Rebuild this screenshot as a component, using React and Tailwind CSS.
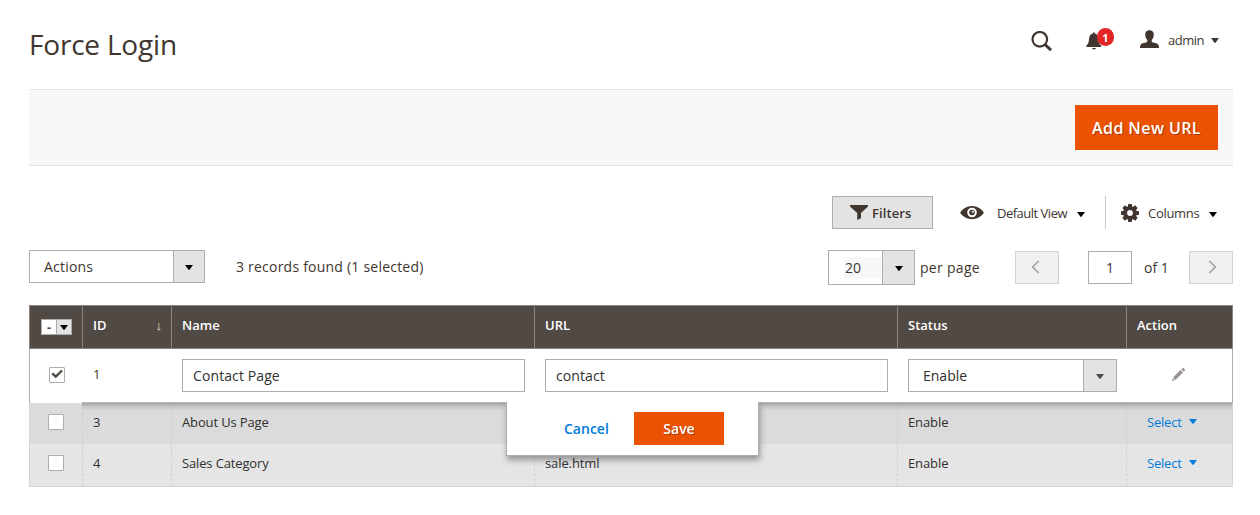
const cols = 'grid grid-cols-[53px_89px_363px_363px_229px_107px]';

function Caret({ className = 'text-black' }) {
  return (
    <svg width="8" height="5" viewBox="0 0 8 5" className={`block shrink-0 ${className}`}>
      <path d="M0 0h8L4.500 4.800h-1z" fill="currentColor" />
    </svg>
  );
}

function SearchIcon() {
  return (
    <svg width="22" height="22" viewBox="0 0 22 22" className="block" fill="none" stroke="#41362f">
      <circle cx="8.800" cy="8.300" r="7.300" strokeWidth="2.200" />
      <path d="M14 13.500l6 5.700" strokeWidth="3" />
    </svg>
  );
}

function BellIcon() {
  return (
    <svg width="16" height="18" viewBox="0 0 16 18" className="block" fill="#41362f">
      <path d="M7 0.4h1.800v1.200c2.200.5 3.400 2.200 3.400 4.800 0 3.600.800 5.600 3 7v1.600H0.400V13.400c2-1.400 2.400-3.400 2.700-7 .2-2.600 1.600-4.300 3.900-4.800z" />
      <path d="M6 16h4c-.2.900-.9 1.400-2 1.400s-1.800-.5-2-1.400z" />
    </svg>
  );
}

function UserIcon() {
  return (
    <svg width="19" height="18" viewBox="0 0 19 18" className="block" fill="#41362f">
      <path d="M9.500 0.300c2.900 0 4.300 1.600 4.300 4.200 0 2.500-.9 4.300-2.100 5.600v1.300c.4 1 1.600 1.200 3.500 1.700 2.400.6 3.700 1.300 3.800 4.900H0c.1-3.600 1.400-4.300 3.800-4.900 1.900-.5 3.100-.7 3.500-1.700v-1.300C6.100 8.800 5.200 7 5.200 4.500 5.200 1.900 6.600.3 9.500.3z" />
    </svg>
  );
}

function FunnelIcon() {
  return (
    <svg width="18" height="15" viewBox="0 0 18 15" className="block" fill="#41362f">
      <path d="M0 0h18v1.500L11 8v5.300L7.200 15V8L0 1.500z" />
    </svg>
  );
}

function EyeIcon() {
  return (
    <svg width="24" height="14" viewBox="0 0 24 14" className="block">
      <path d="M0 6.700C3 2.200 7 0 12 0S21 2.200 24 6.700c-3 4.300-7 6.500-12 6.500S3 11 0 6.700z" fill="#41362f" />
      <circle cx="12" cy="6.500" r="4.800" fill="#fff" />
      <circle cx="12" cy="6.500" r="2.800" fill="#41362f" />
      <circle cx="12.800" cy="5.800" r="1" fill="#fff" />
    </svg>
  );
}

function GearIcon() {
  return (
    <svg width="18" height="18" viewBox="0 0 18 18" className="block">
      <g fill="#41362f">
        <path d="M7.200 0h3.600l.6 4H6.600zM7.200 18h3.600l.6-4H6.600z" />
        <path d="M7.200 0h3.600l.6 4H6.600zM7.200 18h3.600l.6-4H6.600z" transform="rotate(45 9 9)" />
        <path d="M7.200 0h3.600l.6 4H6.600zM7.200 18h3.600l.6-4H6.600z" transform="rotate(90 9 9)" />
        <path d="M7.200 0h3.600l.6 4H6.600zM7.200 18h3.600l.6-4H6.600z" transform="rotate(135 9 9)" />
      </g>
      <circle cx="9" cy="9" r="4.800" fill="none" stroke="#41362f" strokeWidth="3.800" />
    </svg>
  );
}

function PencilIcon() {
  return (
    <svg width="13" height="13" viewBox="0 0 13 13" className="block" fill="#96918e">
      <path d="M9.400 1.300l2.300 2.300 1-1c.4-.4.400-.9 0-1.300l-1-1c-.4-.4-.9-.4-1.300 0z" />
      <path d="M8.600 2l2.400 2.400-7.600 7.600L1 9.600z" />
      <path d="M0.600 10.300l2.100 2.100L0 13z" />
    </svg>
  );
}

function Chevron({ flip }) {
  return (
    <svg width="9" height="14" viewBox="0 0 9 14" className={flip ? 'mb-[2px] ml-[3px] block rotate-180' : 'mb-[2px] mr-[3px] block'} fill="none" stroke="#a6a3a1" strokeWidth="1.700">
      <path d="M7.800 1L1.600 7l6.200 6" />
    </svg>
  );
}

function Checkbox({ checked }) {
  return (
    <span className="flex size-4 items-center justify-center rounded-[1px] border border-[#adadad] bg-white">
      {checked && (
        <svg width="12" height="10" viewBox="0 0 12 10" className="mb-[2px] block" fill="none" stroke="#514943" strokeWidth="2.400">
          <path d="M1.200 4.300l3.600 3.400L11 1.500" />
        </svg>
      )}
    </span>
  );
}

function Header() {
  return (
    <header className="flex h-[89px] items-start justify-between">
      <h1 className="pt-[24px] text-[28px] leading-[40px] tracking-[-0.2px] text-[#41362f]">Force Login</h1>
      <div className="flex pr-[14px] pt-[30px]">
        <div className="mt-[1px] w-[55px]"><SearchIcon /></div>
        <div className="relative w-[54px] pt-[2px]">
          <BellIcon />
          <span className="absolute -top-[2px] left-[11px] flex h-[18px] w-[17px] items-center justify-center rounded-full bg-[#e22626] text-[11px] font-bold leading-none text-white">1</span>
        </div>
        <div className="w-[28px]"><UserIcon /></div>
        <div className="flex h-[22px] items-center text-[13px] tracking-[-0.5px]">
          <span className="w-[43px]">admin</span>
          <Caret className="mb-px text-[#41362f]" />
        </div>
      </div>
    </header>
  );
}

function Toolbar() {
  return (
    <>
      <div className="flex h-[33px] items-center justify-end text-[13px]">
        <button className="flex h-[33px] w-[101px] items-center gap-1 border border-[#adadad] bg-[#e3e3e3] pl-[17px] font-semibold">
          <FunnelIcon />
          <span className="pt-[2px] tracking-[0.1px]">Filters</span>
        </button>
        <div className="ml-[27px] flex h-full w-[146px] items-center border-r border-[#ccc]">
          <EyeIcon />
          <span className="ml-[13px] w-[80px] whitespace-nowrap pt-[2px] tracking-[-0.5px]">Default View</span>
          <Caret className="mt-[3px] text-black" />
        </div>
        <div className="flex w-[127px] items-center pl-[15px]">
          <GearIcon />
          <span className="ml-[9px] w-[61px] pt-[2px] tracking-[-0.3px]">Columns</span>
          <Caret className="mt-[3px] text-black" />
        </div>
      </div>
      <div className="mt-[21px] flex h-[35px] items-start text-[14px]">
        <div className="flex h-[33px] w-[176px] border border-[#adadad]">
          <span className="flex-1 pl-[14px] leading-[31px] tracking-[0.2px]">Actions</span>
          <span className="flex w-[31px] items-center justify-center border-l border-[#adadad] bg-[#e3e3e3] pt-[2px]"><Caret /></span>
        </div>
        <span className="ml-[31px] leading-[33px] tracking-[0.22px]">3 records found (1 selected)</span>
        <div className="ml-auto flex h-[35px] w-[87px] border border-[#adadad]">
          <span className="flex flex-1 items-center pl-[15px]"><span className="h-[21px] w-full bg-[#f8f8f8] pl-[1px] leading-[21px]">20</span></span>
          <span className="flex w-[32px] items-center justify-center border-l border-[#adadad] bg-[#e3e3e3] pt-[2px]"><Caret /></span>
        </div>
        <span className="ml-[5px] w-[95px] leading-[36px] tracking-[0.3px]">per page</span>
        <button className="mt-[1px] flex h-[33px] w-[44px] items-center justify-center border border-[#d4d4d4] bg-[#f0f0f0]"><Chevron /></button>
        <span className="ml-[29px] mt-[1px] h-[33px] w-[44px] border border-[#adadad] text-center leading-[32px]">1</span>
        <span className="ml-[12px] w-[45px] leading-[36px]">of 1</span>
        <button className="mt-[1px] flex h-[33px] w-[44px] items-center justify-center border border-[#d4d4d4] bg-[#f0f0f0]"><Chevron flip /></button>
      </div>
    </>
  );
}

function HeadRow() {
  const cell = 'border-l border-[#8a837f] pl-[10px] leading-[39px]';
  return (
    <div className={`${cols} h-[44px] border-y border-r border-[#8a837f] bg-[#514943] text-[13px] font-semibold text-white`}>
      <div className="border-l border-[#8a837f] pl-[11px] pt-[13px]">
        <div className="flex h-4 w-[31px] border border-[#adadad] bg-white text-[#514943]">
          <span className="w-[14px] text-center font-bold leading-[15px]">-</span>
          <span className="flex flex-1 items-center justify-center border-l border-[#adadad] bg-[#e3e3e3] pt-[1px]"><Caret /></span>
        </div>
      </div>
      <div className={`${cell} flex justify-between pr-[9px]`}><span>ID</span><span className="font-normal text-[#f5e6c5]">↓</span></div>
      <div className={cell}>Name</div>
      <div className={cell}>URL</div>
      <div className={cell}>Status</div>
      <div className={cell}>Action</div>
    </div>
  );
}

function EditRow() {
  const field = 'mt-[10px] h-[33px] w-[343px] border border-[#adadad] pl-[10px] text-[14px] leading-[32px] tracking-[0.1px] text-[#303030]';
  return (
    <div className="relative z-10">
      <div className={`${cols} h-[54px] border-x border-[#adadad] bg-white text-[13px]`}>
        <div className="pl-[19px] pt-[18px]"><Checkbox checked /></div>
        <div className="-mb-px pl-[10px] leading-[50px]">1</div>
        <div className="pl-[10px]"><div className={field}>Contact Page</div></div>
        <div className="pl-[10px]"><div className={field}>contact</div></div>
        <div className="pl-[10px]">
          <div className="mt-[10px] flex h-[33px] w-[209px] border border-[#adadad] text-[14px] text-[#303030]">
            <span className="flex-1 pl-[14px] leading-[32px]">Enable</span>
            <span className="flex w-[33px] items-center justify-center border-l border-[#adadad] bg-[#e3e3e3] pt-[2px]"><Caret className="text-[#514943]" /></span>
          </div>
        </div>
        <div className="pl-[45px] pt-[19px]"><PencilIcon /></div>
      </div>
      <div className="absolute left-[53px] right-[1px] top-[53px] h-[9px] bg-linear-to-b from-black/30 via-black/10 to-transparent" />
      <div className="absolute left-[477px] top-[53px] flex h-[54px] w-[253px] items-start border-x border-b border-[#adadad] bg-white pt-[10px] shadow-[1px_4px_6px_rgba(0,0,0,0.35)] [clip-path:inset(0_-12px_-14px_-12px)]">
        <button className="ml-[57px] w-[70px] text-left text-[14px] font-semibold leading-[33px] text-[#007bdb]">Cancel</button>
        <button className="h-[33px] w-[90px] bg-[#eb5202] text-[14px] font-semibold text-white [text-shadow:1px_1px_0_rgba(0,0,0,0.3)]">Save</button>
      </div>
    </div>
  );
}

function DataRow({ id, name, url, dark }) {
  const cell = 'border-l border-dashed border-[#d0d0d0] pl-[10px]';
  const tone = dark ? 'h-[41px] bg-[#dbdbdb] leading-[39px]' : 'h-[43px] border-b bg-[#e5e5e5] leading-[39px]';
  return (
    <div className={`${cols} ${tone} border-r border-[#d6d6d6] text-[13px] text-[#303030]`}>
      <div className="border-l border-[#d6d6d6] pl-[18px] pt-[11px]"><Checkbox /></div>
      <div className={cell}>{id}</div>
      <div className={`${cell} tracking-[-0.14px]`}>{name}</div>
      <div className={`${cell} tracking-[-0.1px]`}>{url}</div>
      <div className={`${cell} tracking-[-0.1px]`}>Enable</div>
      <div className={`${cell} flex text-[#007bdb]`}>
        <span className="w-[52px] pl-[10px] tracking-[-0.2px]">Select</span>
        <span className="pt-[16px]"><Caret className="text-[#007bdb]" /></span>
      </div>
    </div>
  );
}

export default function App() {
  return (
    <main className="h-[515px] w-[1260px] overflow-hidden bg-white pl-[29px] pr-[27px] font-['Open_Sans',sans-serif] text-[#41362f]">
      <Header />
      <div className="flex h-[77px] items-center justify-end border-y border-[#e3e3e3] bg-[#f8f8f8] pr-[15px]">
        <button className="h-[45px] w-[143px] bg-[#eb5202] text-[16px] font-semibold tracking-[0.4px] text-white [text-shadow:1px_1px_0_rgba(0,0,0,0.3)]">Add New URL</button>
      </div>
      <div className="pt-[30px]"><Toolbar /></div>
      <section className="mt-[20px]">
        <HeadRow />
        <EditRow />
        <DataRow id="3" name="About Us Page" url="" dark />
        <DataRow id="4" name="Sales Category" url="sale.html" />
      </section>
    </main>
  );
}
